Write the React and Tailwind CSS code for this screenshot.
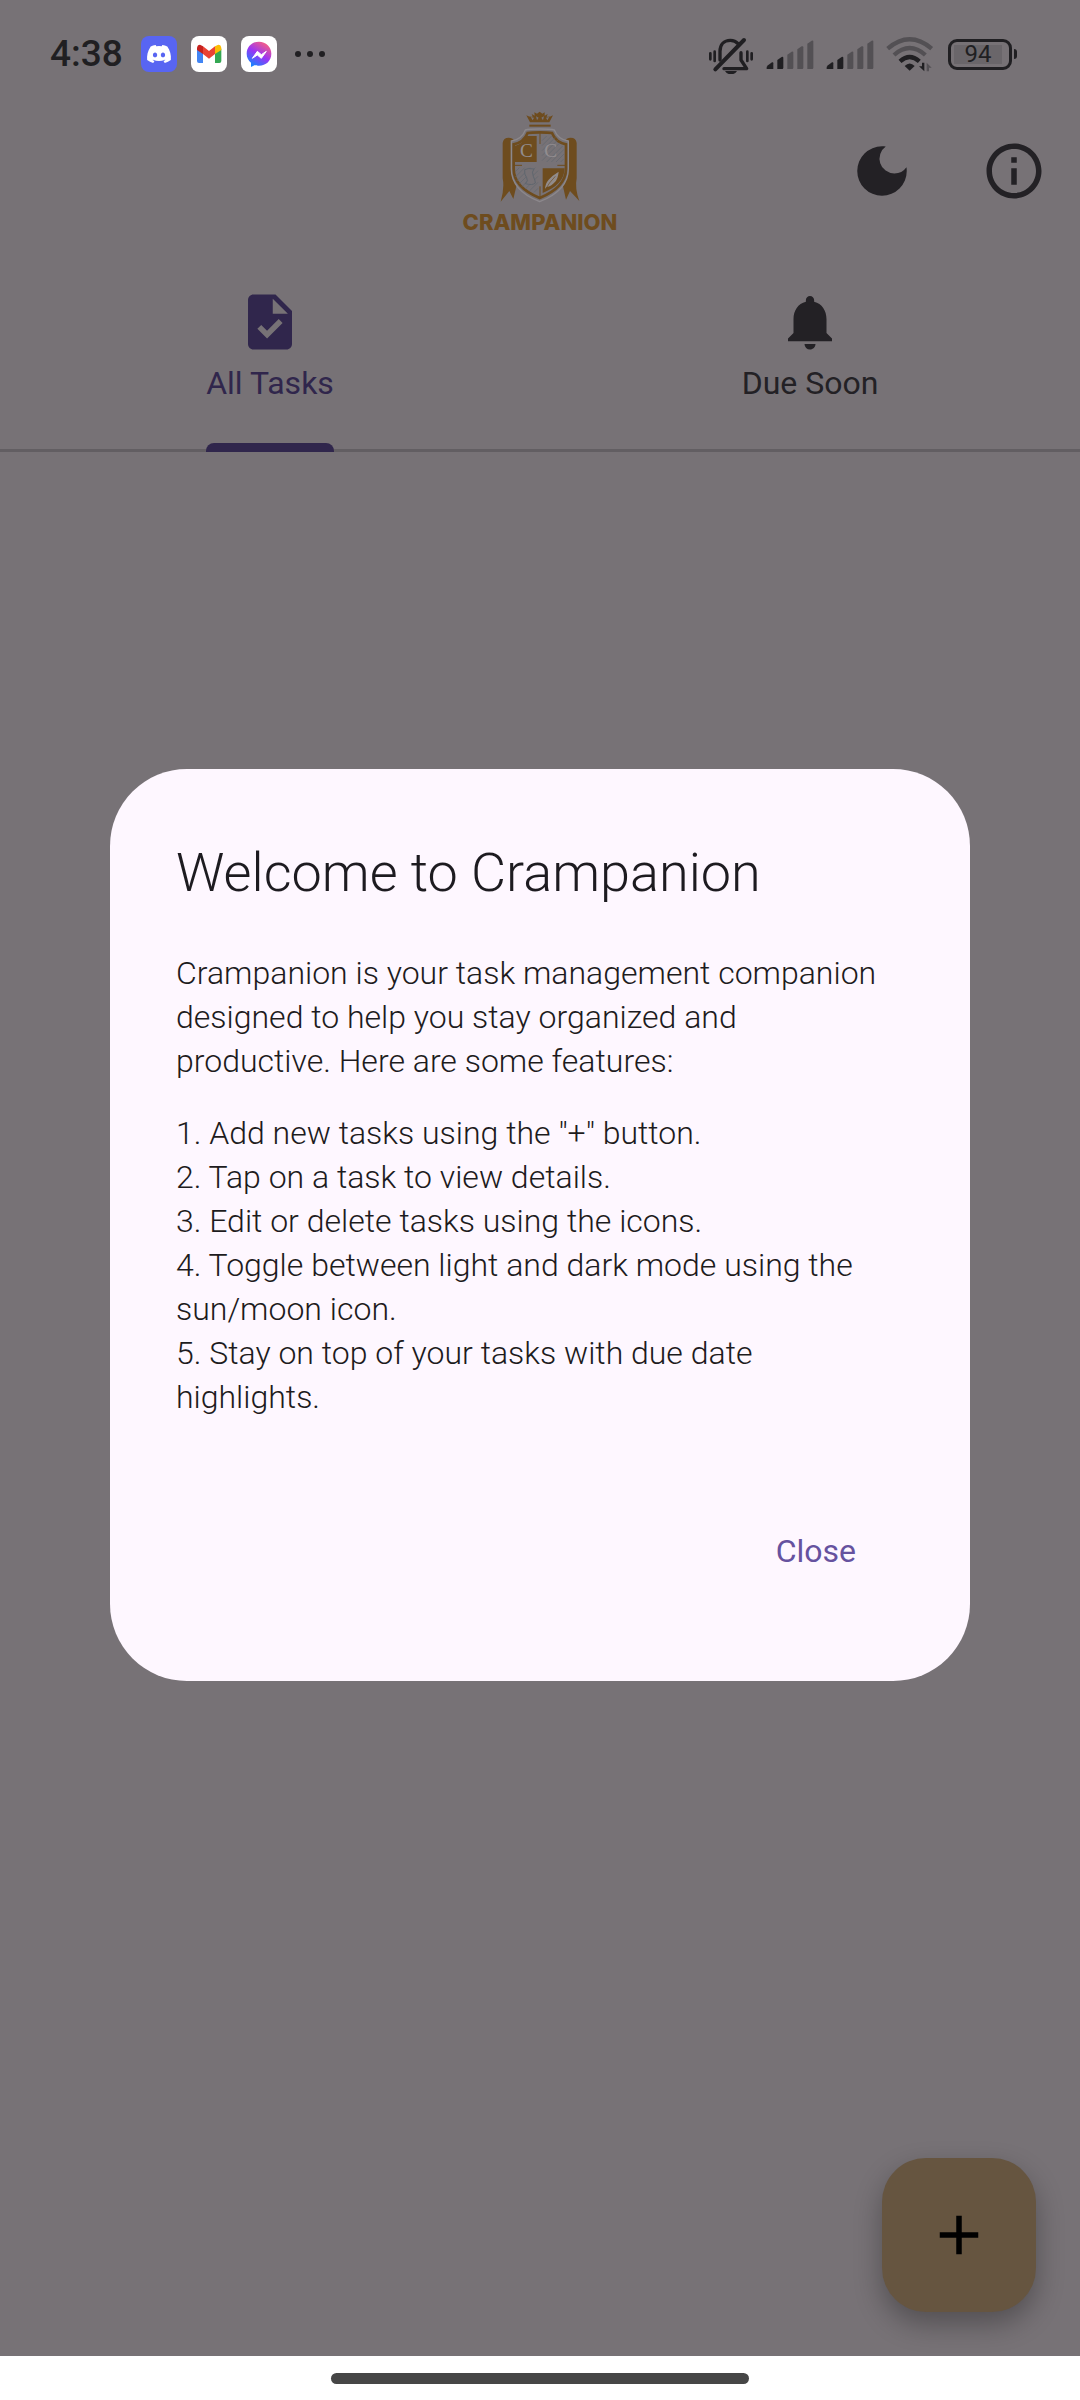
import React from "react";
import { MdAdd, MdDarkMode, MdInfoOutline, MdNotifications, MdTask } from "react-icons/md";
import { FaDiscord } from "react-icons/fa";

const features = [
  'Add new tasks using the "+" button.',
  "Tap on a task to view details.",
  "Edit or delete tasks using the icons.",
  "Toggle between light and dark mode using the sun/moon icon.",
  "Stay on top of your tasks with due date highlights.",
];

function GmailIcon() {
  return (
    <svg viewBox="0 0 108 108" className="size-9 rounded-lg bg-white" aria-label="Gmail">
      <path d="M18 38v37q0 6 6 6h12V46z" fill="#4285f4" />
      <path d="M72 46v35h13q6 0 6-6V38z" fill="#34a853" />
      <path d="M18 36q1-10 9-10l9 5v23L18 42z" fill="#c5221f" />
      <path d="M91 36q-1-10-9-10l-10 5v23l19-12z" fill="#fbbc04" />
      <path d="M36 31l18 14 18-14v23L54 68 36 54z" fill="#ea4335" />
    </svg>
  );
}

function MessengerIcon() {
  return (
    <svg viewBox="0 0 108 108" className="size-9 rounded-lg bg-white" aria-label="Messenger">
      <defs>
        <linearGradient id="messenger" x1="0.2" y1="1" x2="0.8" y2="0">
          <stop offset="0" stopColor="#0a8cff" />
          <stop offset="0.5" stopColor="#9a35f5" />
          <stop offset="1" stopColor="#ff6378" />
        </linearGradient>
      </defs>
      <path
        d="M54 17C33 17 17 32 17 53c0 11 5 20 13 27v13l12-6c4 2 8 2 12 2 21 0 37-15 37-36S75 17 54 17z"
        fill="url(#messenger)"
      />
      <path d="M34 67l15-21 12 10 15-10-15 21-12-10z" fill="#fff" stroke="#fff" strokeWidth="3" strokeLinejoin="round" />
    </svg>
  );
}

function MutedBell() {
  return (
    <svg viewBox="0 0 138 120" className="h-10 w-[46px]" fill="none" stroke="#201f22" strokeLinecap="round" aria-label="Vibrate">
      <path d="M36 78V52c0-20 12-33 31-33 10 0 18 4 23 10M99 56v22l17 26H48" strokeWidth="10" strokeLinejoin="round" />
      <path d="M22 106l86-88" strokeWidth="12" />
      <path d="M51 115h36q-6 10-18 10t-18-10z" fill="#201f22" stroke="none" transform="translate(0 -4)" />
      <path d="M7 58v18M20 53v28M118 53v28M131 58v18" strokeWidth="8" />
    </svg>
  );
}

function Signal() {
  return (
    <svg viewBox="0 0 144 96" className="h-8 w-12" fill="#535054" aria-label="Signal">
      <path d="M2 93q-2-6 4-11l12-9q4-2 4 3v17z" fill="#201f22" />
      <path d="M34 93V66l13-9q5-2 5 3v30l-2 3z" fill="#201f22" />
      <path d="M64 93V50l13-9q5-2 5 3v46l-2 3z" />
      <path d="M94 93V34l13-9q5-2 5 3v62l-2 3z" />
      <path d="M124 93V17l13-9q5-2 5 3v79l-2 3z" />
    </svg>
  );
}

function Wifi() {
  return (
    <svg viewBox="0 0 144 108" className="h-9 w-12" fill="none" strokeWidth="13" aria-label="Wi-Fi">
      <path d="M5 38Q71-18 137 38" stroke="#535054" />
      <path d="M24 57Q71 15 118 57" stroke="#535054" />
      <path d="M42 76Q71 50 100 76" stroke="#201f22" />
      <path d="M56 90q15-15 30 0L71 104z" fill="#201f22" />
      <path d="M115 80v26l-16-15h9V80z" fill="#201f22" />
      <path d="M122 106V80l15 15h-8v11z" fill="#535054" />
    </svg>
  );
}

function StatusBar() {
  return (
    <div className="flex h-[94px] items-center justify-between pt-[14px] pr-[63px] pl-[50px]">
      <div className="flex items-center gap-[14px]">
        <span className="mr-1 text-[37px] leading-10 font-medium text-[#201f22]">4:38</span>
        <span className="flex size-9 items-center justify-center rounded-lg bg-[#5865f2] text-white">
          <FaDiscord size={26} aria-label="Discord" />
        </span>
        <GmailIcon />
        <MessengerIcon />
        <span className="ml-1 flex gap-1.5">
          <i className="size-[6px] rounded-full bg-[#201f22]" />
          <i className="size-[6px] rounded-full bg-[#201f22]" />
          <i className="size-[6px] rounded-full bg-[#201f22]" />
        </span>
      </div>
      <div className="flex items-center gap-3">
        <MutedBell />
        <Signal />
        <Signal />
        <Wifi />
        <span className="ml-0.5 flex items-center gap-0.5">
          <span className="flex h-[31px] w-16 rounded-[9px] border-3 border-[#201f22] p-[3px]">
            <span className="flex h-full w-12 items-center justify-center bg-[#6a666a] text-[24px] leading-5 text-[#201f22]">
              94
            </span>
          </span>
          <i className="h-[10px] w-[3px] rounded-r bg-[#201f22]" />
        </span>
      </div>
    </div>
  );
}

function Logo() {
  return (
    <div className="flex flex-col items-center gap-1 pt-1 text-[#6e4c1e]">
      <svg viewBox="176 34 252 280" className="h-[94px] w-[84px]" fill="none" stroke="currentColor" aria-hidden="true">
        <g fill="currentColor" stroke="none">
          <path d="M272 70l-11-21q12 6 19 4l-3-8 9 5-1-10 8 4 8-6 8 6 7-4v10l9-5-3 8q8 2 19-4l-11 21z" />
          <path d="M270 77h64v6h-64z" />
          <path d="M190 132q2-16 18-16 12 0 16 8l-8 92q4 24 16 42l-10 42-12-24-26 32q12-40 6-70z" />
          <path d="M412 132q-2-16-18-16-12 0-16 8l8 92q-4 24-16 42l10 44 12-26 28 30q-14-38-8-68z" />
        </g>
        <g fill="#777276" stroke="none">
          <path d="M280 64l-6-10 10 2zM293 64l-3-12 8 4zM311 64l3-12-8 4zM324 64l6-10-10 2z" />
        </g>
        <path d="M300 90c-18 0-32 0-42 3-6 16-20 30-42 33v84c0 46 34 78 85 98 51-20 86-52 86-98v-84c-22-3-36-17-42-33-10-3-27-3-45-3z" fill="#777276" stroke="#8c888c" strokeWidth="4" />
        <path d="M301 100c-16 0-26 0-36 2-7 17-21 30-42 34v74c0 40 30 67 78 87 48-20 79-47 79-87v-74c-21-4-35-17-42-34-10-2-21-2-37-2z" strokeWidth="8" />
        <path d="M262 111h30v78h-66v-48c18-5 28-15 36-30zM310 208h66c-1 36-26 58-66 74z" fill="currentColor" stroke="none" />
        <path d="M302 101v34M302 262v34M222 199h26M354 199h26" strokeWidth="3" />
        <g stroke="#5f666e" strokeWidth="2">
          <path d="M308 125l14-14M308 140l29-29M308 155l40-40M308 170l47-47M308 185l54-54M322 189l48-48M336 189l38-38M350 189l24-24M364 189l10-10" />
          <path d="M228 218l12-12M228 234l28-28M232 246l40-40M240 254l48-48M248 263l48-48M258 270l38-38M270 276l26-26M284 280l12-12" />
          <path d="M256 212q10-6 28-2-8 8-2 22t6 20q-8 8-30 2 10-8 4-18-8-10-6-24z" fill="#777276" strokeWidth="3" />
        </g>
        <path d="M318 270q-2-14 10-28 10-12 30-24-2 22-12 32-10 12-24 14z" fill="#918b8b" stroke="none" />
        <path d="M318 272q10-20 30-40" stroke="#6e4c1e" strokeWidth="2" />
        <g fill="#928d90" stroke="none" fontFamily="Liberation Serif, serif" fontSize="58" textAnchor="middle">
          <text x="261" y="174">C</text>
          <text x="334" y="174">C</text>
        </g>
      </svg>
      <span className="font-[Inter,sans-serif] text-[22px] leading-7 font-extrabold">CRAMPANION</span>
    </div>
  );
}

export default function App() {
  return (
    <div className="relative flex min-h-screen flex-col bg-[#777276] font-[Roboto,sans-serif] text-[#232125]">
      <StatusBar />
      <header className="grid h-[154px] grid-cols-3 items-center">
        <h1 className="col-start-2 flex justify-center" aria-label="Crampanion">
          <Logo />
        </h1>
        <div className="flex justify-end">
          <button className="flex size-[132px] items-center justify-center" aria-label="Dark mode">
            <MdDarkMode size={66} />
          </button>
          <button className="flex size-[132px] items-center justify-center" aria-label="About">
            <MdInfoOutline size={66} />
          </button>
        </div>
      </header>
      <nav className="grid h-[204px] grid-cols-2 border-b-3 border-[#625e62] text-[32px] leading-11" role="tablist">
        <button role="tab" aria-selected="true" className="-mb-[3px] flex flex-col items-center justify-between pt-[41px] text-[#30264c]">
          <span className="flex flex-col items-center gap-[6px]">
            <MdTask size={66} />
            <span>All Tasks</span>
          </span>
          <i className="h-[9px] w-32 rounded-t-lg bg-[#30264c]" />
        </button>
        <button role="tab" aria-selected="false" className="flex flex-col items-center gap-[6px] pt-[41px]">
          <MdNotifications size={66} />
          <span>Due Soon</span>
        </button>
      </nav>
      <main className="flex flex-1 items-end justify-end p-11">
        <button
          className="flex size-[154px] items-center justify-center rounded-[44px] bg-[#665540] text-black shadow-[0_12px_28px_rgba(0,0,0,0.3)]"
          aria-label="Add task"
        >
          <MdAdd size={66} />
        </button>
      </main>
      <footer className="relative z-10 flex h-11 justify-center bg-white pt-[17px]">
        <i className="h-[11px] w-[418px] rounded-full bg-[#464646]" />
      </footer>

      <div className="absolute inset-0 flex items-center justify-center px-[110px] pt-[94px] pb-11">
        <section
          role="dialog"
          aria-labelledby="welcome"
          className="w-full rounded-[77px] bg-[#fef7ff] px-[66px] pt-[68px] pb-16 font-light text-[#1d1b20]"
        >
          <h2 id="welcome" className="text-[54px] leading-[72px]">Welcome to Crampanion</h2>
          <div className="pt-[42px] text-[32px] leading-11">
            <p className="pb-7">
              Crampanion is your task management companion
              <br />
              designed to help you stay organized and
              <br />
              productive. Here are some features:
            </p>
            <ol>
              {features.map((feature, i) => (
                <li key={feature}>{`${i + 1}. ${feature}`}</li>
              ))}
            </ol>
          </div>
          <div className="flex justify-end pt-[66px]">
            <button className="h-[132px] px-12 text-[32px] font-normal text-[#66529f]">Close</button>
          </div>
        </section>
      </div>
    </div>
  );
}
